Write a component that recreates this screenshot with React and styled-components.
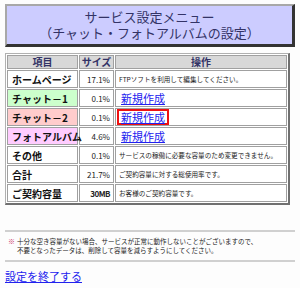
import styled, { createGlobalStyle } from 'styled-components'

const Global = createGlobalStyle`
  body {
    margin: 0;
    background: #fdfdfd;
    font-family: "Noto Sans CJK JP", "Liberation Sans", sans-serif;
    color: #222;
  }
`

const Page = styled.div`
  width: 300px;
  padding: 4px 5px 0 5px;
  box-sizing: border-box;
`

const TitleBox = styled.div`
  background: #ccccff;
  color: #333366;
  border-style: solid;
  border-width: 2px 3px 3px 2px;
  border-color: #a8a8a8 #333 #333 #a8a8a8;
  text-align: center;
  font-size: 13px;
  line-height: 16px;
  padding: 3px 0 3px;
`

const Table = styled.table`
  margin-top: 6px;
  width: 285px;
  border-collapse: separate;
  border-spacing: 1px;
  border-style: solid;
  border-width: 1px 2px 2px 1px;
  border-color: #b0b0b0 #707070 #707070 #b0b0b0;
  background: #fff;
  table-layout: fixed;
`

const Th = styled.th`
  background: #d8d8d8;
  color: #333366;
  font-size: 10px;
  line-height: 12px;
  font-weight: bold;
  height: 12px;
  padding: 0;
  border: 1px solid #a0a0a0;
  width: ${p => p.w || 'auto'};
`

const Row = styled.tr`
  height: 18px;
`

const NameCell = styled.td`
  background: ${p => p.bg || '#fff'};
  font-size: 10px;
  font-weight: bold;
  color: #111;
  padding: 0 0 0 4px;
  border: 1px solid #a0a0a0;
  white-space: nowrap;
`

const SizeCell = styled.td`
  font-size: 8px;
  text-align: right;
  padding: 0 3px 0 0;
  border: 1px solid #a0a0a0;
  font-weight: ${p => (p.bold ? 'bold' : 'normal')};
  letter-spacing: ${p => (p.bold ? '-0.5px' : '0')};
`

const OpCell = styled.td`
  font-size: 6.6px;
  padding: 0 0 0 3px;
  border: 1px solid #a0a0a0;
  white-space: nowrap;
  overflow: hidden;
`

const NewLink = styled.a`
  display: inline-block;
  font-size: 11px;
  line-height: 12px;
  color: #2222ee;
  text-decoration: underline;
  padding: 0 2px;
  margin-left: -2px;
  border: 2px solid ${p => (p.marked ? '#ee1111' : 'transparent')};
`

const Note = styled.div`
  margin-top: 25px;
  border-top: 2px solid #d0d0d0;
  border-bottom: 2px solid #d0d0d0;
  padding: 5px 0 5px 3px;
  font-size: 6.5px;
  line-height: 9px;
  display: flex;
  gap: 2px;
`

const Mark = styled.span`
  color: #cc3366;
  font-size: 7px;
`

const EndLink = styled.a`
  display: inline-block;
  margin-top: 2px;
  font-size: 11px;
  line-height: 14px;
  color: #2222ee;
  text-decoration: underline;
`

const rows = [
  { name: 'ホームページ', size: '17.1%', op: 'FTPソフトを利用して編集してください。' },
  { name: 'チャット－1', size: '0.1%', link: true, bg: '#ccffcc' },
  { name: 'チャット－2', size: '0.1%', link: true, marked: true, bg: '#ffcccc' },
  { name: 'フォトアルバム', size: '4.6%', link: true, bg: '#ffccff' },
  { name: 'その他', size: '0.1%', op: 'サービスの稼働に必要な容量のため変更できません。' },
  { name: '合計', size: '21.7%', op: 'ご契約容量に対する総使用率です。' },
  { name: 'ご契約容量', size: '30MB', op: 'お客様のご契約容量です。', bold: true },
]

export default function App() {
  return (
    <Page>
      <Global />
      <TitleBox>
        サービス設定メニュー
        <br />
        （チャット・フォトアルバムの設定）
      </TitleBox>
      <Table>
        <thead>
          <tr>
            <Th w="69px">項目</Th>
            <Th w="33px">サイズ</Th>
            <Th>操作</Th>
          </tr>
        </thead>
        <tbody>
          {rows.map(r => (
            <Row key={r.name}>
              <NameCell bg={r.bg}>{r.name}</NameCell>
              <SizeCell bold={r.bold}>{r.size}</SizeCell>
              <OpCell>
                {r.link ? <NewLink href="#" marked={r.marked}>新規作成</NewLink> : r.op}
              </OpCell>
            </Row>
          ))}
        </tbody>
      </Table>
      <Note>
        <Mark>※</Mark>
        <span>
          十分な空き容量がない場合、サービスが正常に動作しないことがございますので、
          <br />
          不要となったデータは、削除して容量を減らすようにしてください。
        </span>
      </Note>
      <EndLink href="#">設定を終了する</EndLink>
    </Page>
  )
}
